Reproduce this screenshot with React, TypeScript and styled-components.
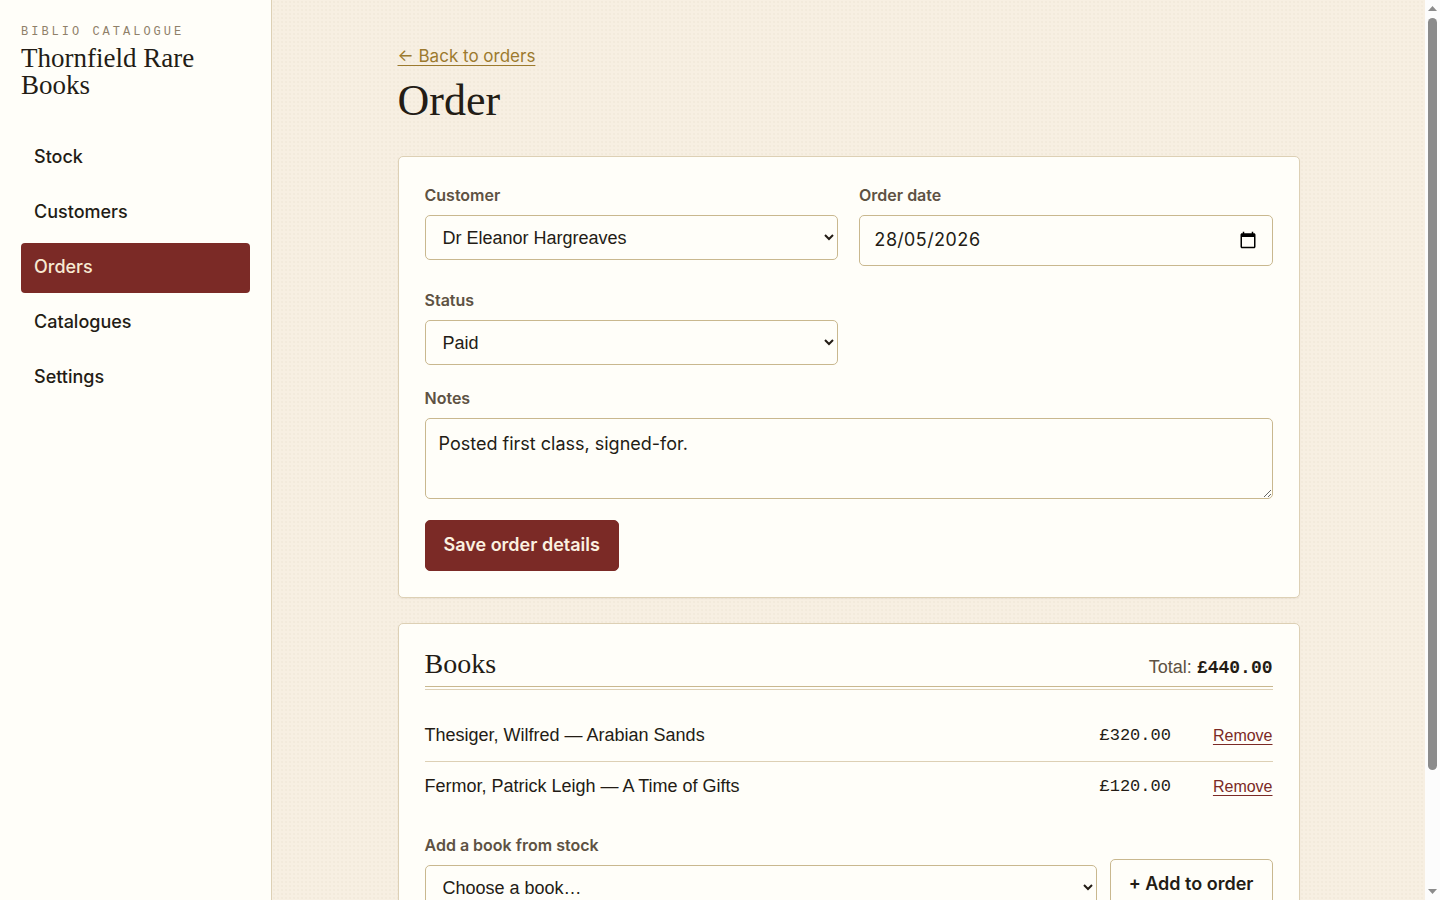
import React from "react";
import styled, { createGlobalStyle, css } from "styled-components";

const sans = `"Liberation Sans", Arial, sans-serif`;
const ui = `Inter, "Liberation Sans", sans-serif`;
const serif = `"Liberation Serif", "Times New Roman", serif`;
const mono = `"Liberation Mono", "Courier New", monospace`;

const ink = "#231c15";
const muted = "#5e5243";
const faint = "#8f8069";
const paper = "#fffef9";
const line = "#ddd0b5";
const lineStrong = "#c9b88f";
const oxblood = "#7b2a26";
const gold = "#9c7a2e";

const GlobalStyle = createGlobalStyle`
  *, *::before, *::after { box-sizing: border-box; }
  body {
    margin: 0;
    color: ${ink};
    font-family: ${sans};
    font-size: 18px;
    line-height: 28px;
    background: #f7efe2;
  }
`;

const Shell = styled.div`
  display: grid;
  grid-template-columns: 272px minmax(0, 1fr) 15px;
  height: 100vh;
`;

const Sidebar = styled.aside`
  padding: 21px;
  background: ${paper};
  border-right: 1px solid ${line};
`;

const Eyebrow = styled.div`
  font-family: ${mono};
  font-size: 12px;
  line-height: 22px;
  letter-spacing: 3px;
  text-transform: uppercase;
  color: ${faint};
`;

const ShopName = styled.div`
  margin: 2px 0 34px;
  font-family: ${serif};
  font-size: 27px;
  line-height: 27px;
`;

const Nav = styled.nav`
  display: flex;
  flex-direction: column;
  gap: 5px;
`;

const NavLink = styled.a<{ $active?: boolean }>`
  padding: 10px 13px 12px;
  border-radius: 4px;
  font-family: ${ui};
  font-size: 18px;
  line-height: 28px;
  font-weight: 500;
  text-decoration: none;
  color: ${(p) => (p.$active ? "#f7e9d2" : ink)};
  background: ${(p) => (p.$active ? oxblood : "transparent")};
`;

const Scroller = styled.div`
  min-height: 0;
  overflow-y: auto;
  scrollbar-width: none;
  background-color: #f7efe2;
  background-image: radial-gradient(rgba(123, 90, 50, 0.035) 1px, transparent 1px);
  background-size: 4px 4px;
`;

const Main = styled.main`
  width: 100%;
  max-width: 902px;
  margin: 0 auto;
  padding: 42px 0 98px;
`;

const BackLink = styled.a`
  display: inline-block;
  font-family: ${ui};
  font-size: 17px;
  line-height: 28px;
  color: ${gold};
  text-underline-offset: 3px;
`;

const Title = styled.h1`
  margin: 7px 0 31px;
  font-family: ${serif};
  font-size: 44px;
  line-height: 48px;
  font-weight: 400;
`;

const Card = styled.section`
  padding: 26px;
  background: ${paper};
  border: 1px solid ${line};
  border-radius: 5px;
  box-shadow: 0 1px 2px rgba(60, 40, 20, 0.06);

  & + & { margin-top: 25px; }
`;

const OrderForm = styled.form`
  display: flex;
  flex-direction: column;
  align-items: flex-start;
  gap: 21px;
`;

const FieldGrid = styled.div`
  display: grid;
  grid-template-columns: 1fr 1fr;
  align-items: start;
  gap: 22px 21px;
  width: 100%;
`;

const Field = styled.div`
  display: flex;
  flex-direction: column;
  gap: 8px;
  flex: 1;
  min-width: 0;
`;

const WideField = styled(Field)`
  width: 100%;
`;

const Label = styled.label`
  font-family: ${ui};
  font-size: 16px;
  line-height: 24px;
  font-weight: 600;
  color: ${muted};
`;

const control = css`
  width: 100%;
  margin: 0;
  font-size: 18px;
  color: ${ink};
  background: ${paper};
  border: 1px solid ${lineStrong};
  border-radius: 5px;
`;

const Select = styled.select`
  ${control}
  height: 45px;
  padding: 0 0 0 13px;
  font-family: ${sans};
`;

const DateBox = styled.div`
  ${control}
  display: flex;
  align-items: center;
  height: 51px;
  padding: 0 15px 2px 14px;
`;

const DateInput = styled.input`
  flex: 1;
  min-width: 0;
  padding: 0;
  border: 0;
  outline: 0;
  background: none;
  color: inherit;
  font-family: ${ui};
  font-size: 18px;
  font-variant-numeric: tabular-nums;
`;

const PickerButton = styled.button`
  display: flex;
  padding: 0;
  border: 0;
  background: none;
  color: #000;
`;

const TextArea = styled.textarea`
  ${control}
  display: block;
  height: 81px;
  padding: 11px 13px;
  font-family: ${ui};
  line-height: 28px;
  resize: vertical;
`;

const Button = styled.button<{ $primary?: boolean }>`
  height: 51px;
  padding: 0 18px 2px;
  font-family: ${ui};
  font-size: 18px;
  line-height: 28px;
  font-weight: 600;
  white-space: nowrap;
  border-radius: 5px;
  border: 1px solid ${(p) => (p.$primary ? oxblood : lineStrong)};
  color: ${(p) => (p.$primary ? "#fbf1e0" : ink)};
  background: ${(p) => (p.$primary ? oxblood : paper)};
`;

const CardHeader = styled.header`
  display: flex;
  align-items: baseline;
  justify-content: space-between;
  height: 37px;
  margin-bottom: 24px;
  border-bottom: 1px solid ${lineStrong};
  box-shadow: 0 2px 0 ${paper}, 0 3px 0 ${line};
`;

const CardTitle = styled.h2`
  margin: 0;
  font-family: ${serif};
  font-size: 28px;
  line-height: 28px;
  font-weight: 400;
`;

const Total = styled.div`
  color: ${muted};

  strong {
    font-family: ${mono};
    color: ${ink};
  }
`;

const BookList = styled.ul`
  margin: 0 0 22px;
  padding: 0;
  list-style: none;
`;

const BookRow = styled.li`
  display: flex;
  align-items: center;
  height: 50px;

  & + & {
    border-top: 1px solid ${line};
  }
`;

const BookName = styled.span`
  flex: 1;
  padding-bottom: 2px;
`;

const Price = styled.span`
  margin-right: 42px;
  font-family: ${mono};
  font-size: 17px;
`;

const RemoveButton = styled.button`
  padding: 0;
  border: 0;
  background: none;
  font-family: ${sans};
  font-size: 16px;
  line-height: 28px;
  color: ${oxblood};
  text-decoration: underline;
  text-underline-offset: 3px;
`;

const AddRow = styled.form`
  display: flex;
  align-items: flex-end;
  gap: 13px;
`;

const ScrollRail = styled.div`
  display: flex;
  flex-direction: column;
  align-items: center;
  padding: 6px 0;
  background: #fcfcfc;
`;

const ScrollTrack = styled.div`
  flex: 1;
  width: 9px;
  margin: 7px 0;
`;

const ScrollThumb = styled.div`
  height: 87%;
  border-radius: 5px;
  background: #8b8b8b;
`;

const RailArrow = styled.svg`
  display: block;
  width: 9px;
  height: 5px;
  fill: #8b8b8b;
`;

const navItems = ["Stock", "Customers", "Orders", "Catalogues", "Settings"];

const books = [
  { name: "Thesiger, Wilfred — Arabian Sands", price: "£320.00" },
  { name: "Fermor, Patrick Leigh — A Time of Gifts", price: "£120.00" },
];

export default function App() {
  return (
    <>
      <GlobalStyle />
      <Shell>
        <Sidebar>
          <Eyebrow>Biblio Catalogue</Eyebrow>
          <ShopName>Thornfield Rare Books</ShopName>
          <Nav>
            {navItems.map((item) => (
              <NavLink
                key={item}
                href={`#${item.toLowerCase()}`}
                $active={item === "Orders"}
                aria-current={item === "Orders" ? "page" : undefined}
              >
                {item}
              </NavLink>
            ))}
          </Nav>
        </Sidebar>
        <Scroller>
          <Main>
            <BackLink href="#orders">← Back to orders</BackLink>
            <Title>Order</Title>
            <Card>
              <OrderForm onSubmit={(e) => e.preventDefault()}>
                <FieldGrid>
                  <Field>
                    <Label htmlFor="customer">Customer</Label>
                    <Select id="customer">
                      <option>Dr Eleanor Hargreaves</option>
                    </Select>
                  </Field>
                  <Field>
                    <Label htmlFor="date">Order date</Label>
                    <DateBox>
                      <DateInput id="date" type="text" inputMode="numeric" defaultValue="28/05/2026" />
                      <PickerButton type="button" aria-label="Show date picker">
                        <svg width="18" height="18" viewBox="0 0 24 24" fill="currentColor" aria-hidden="true">
                          <path d="M20 3h-1V1h-2v2H7V1H5v2H4c-1.1 0-2 .9-2 2v16c0 1.1.9 2 2 2h16c1.1 0 2-.9 2-2V5c0-1.1-.9-2-2-2zm0 18H4V8h16v13z" />
                        </svg>
                      </PickerButton>
                    </DateBox>
                  </Field>
                  <Field>
                    <Label htmlFor="status">Status</Label>
                    <Select id="status">
                      <option>Paid</option>
                    </Select>
                  </Field>
                </FieldGrid>
                <WideField>
                  <Label htmlFor="notes">Notes</Label>
                  <TextArea id="notes" defaultValue="Posted first class, signed-for." />
                </WideField>
                <Button $primary type="submit">Save order details</Button>
              </OrderForm>
            </Card>
            <Card>
              <CardHeader>
                <CardTitle>Books</CardTitle>
                <Total>
                  Total: <strong>£440.00</strong>
                </Total>
              </CardHeader>
              <BookList>
                {books.map((book) => (
                  <BookRow key={book.name}>
                    <BookName>{book.name}</BookName>
                    <Price>{book.price}</Price>
                    <RemoveButton type="button">Remove</RemoveButton>
                  </BookRow>
                ))}
              </BookList>
              <AddRow onSubmit={(e) => e.preventDefault()}>
                <Field>
                  <Label htmlFor="book">Add a book from stock</Label>
                  <Select id="book">
                    <option>Choose a book…</option>
                  </Select>
                </Field>
                <Button type="submit">+ Add to order</Button>
              </AddRow>
            </Card>
          </Main>
        </Scroller>
        <ScrollRail aria-hidden="true">
          <RailArrow viewBox="0 0 9 5">
            <path d="M0 5L4.5 0L9 5Z" />
          </RailArrow>
          <ScrollTrack>
            <ScrollThumb />
          </ScrollTrack>
          <RailArrow viewBox="0 0 9 5">
            <path d="M0 0L4.5 5L9 0Z" />
          </RailArrow>
        </ScrollRail>
      </Shell>
    </>
  );
}
